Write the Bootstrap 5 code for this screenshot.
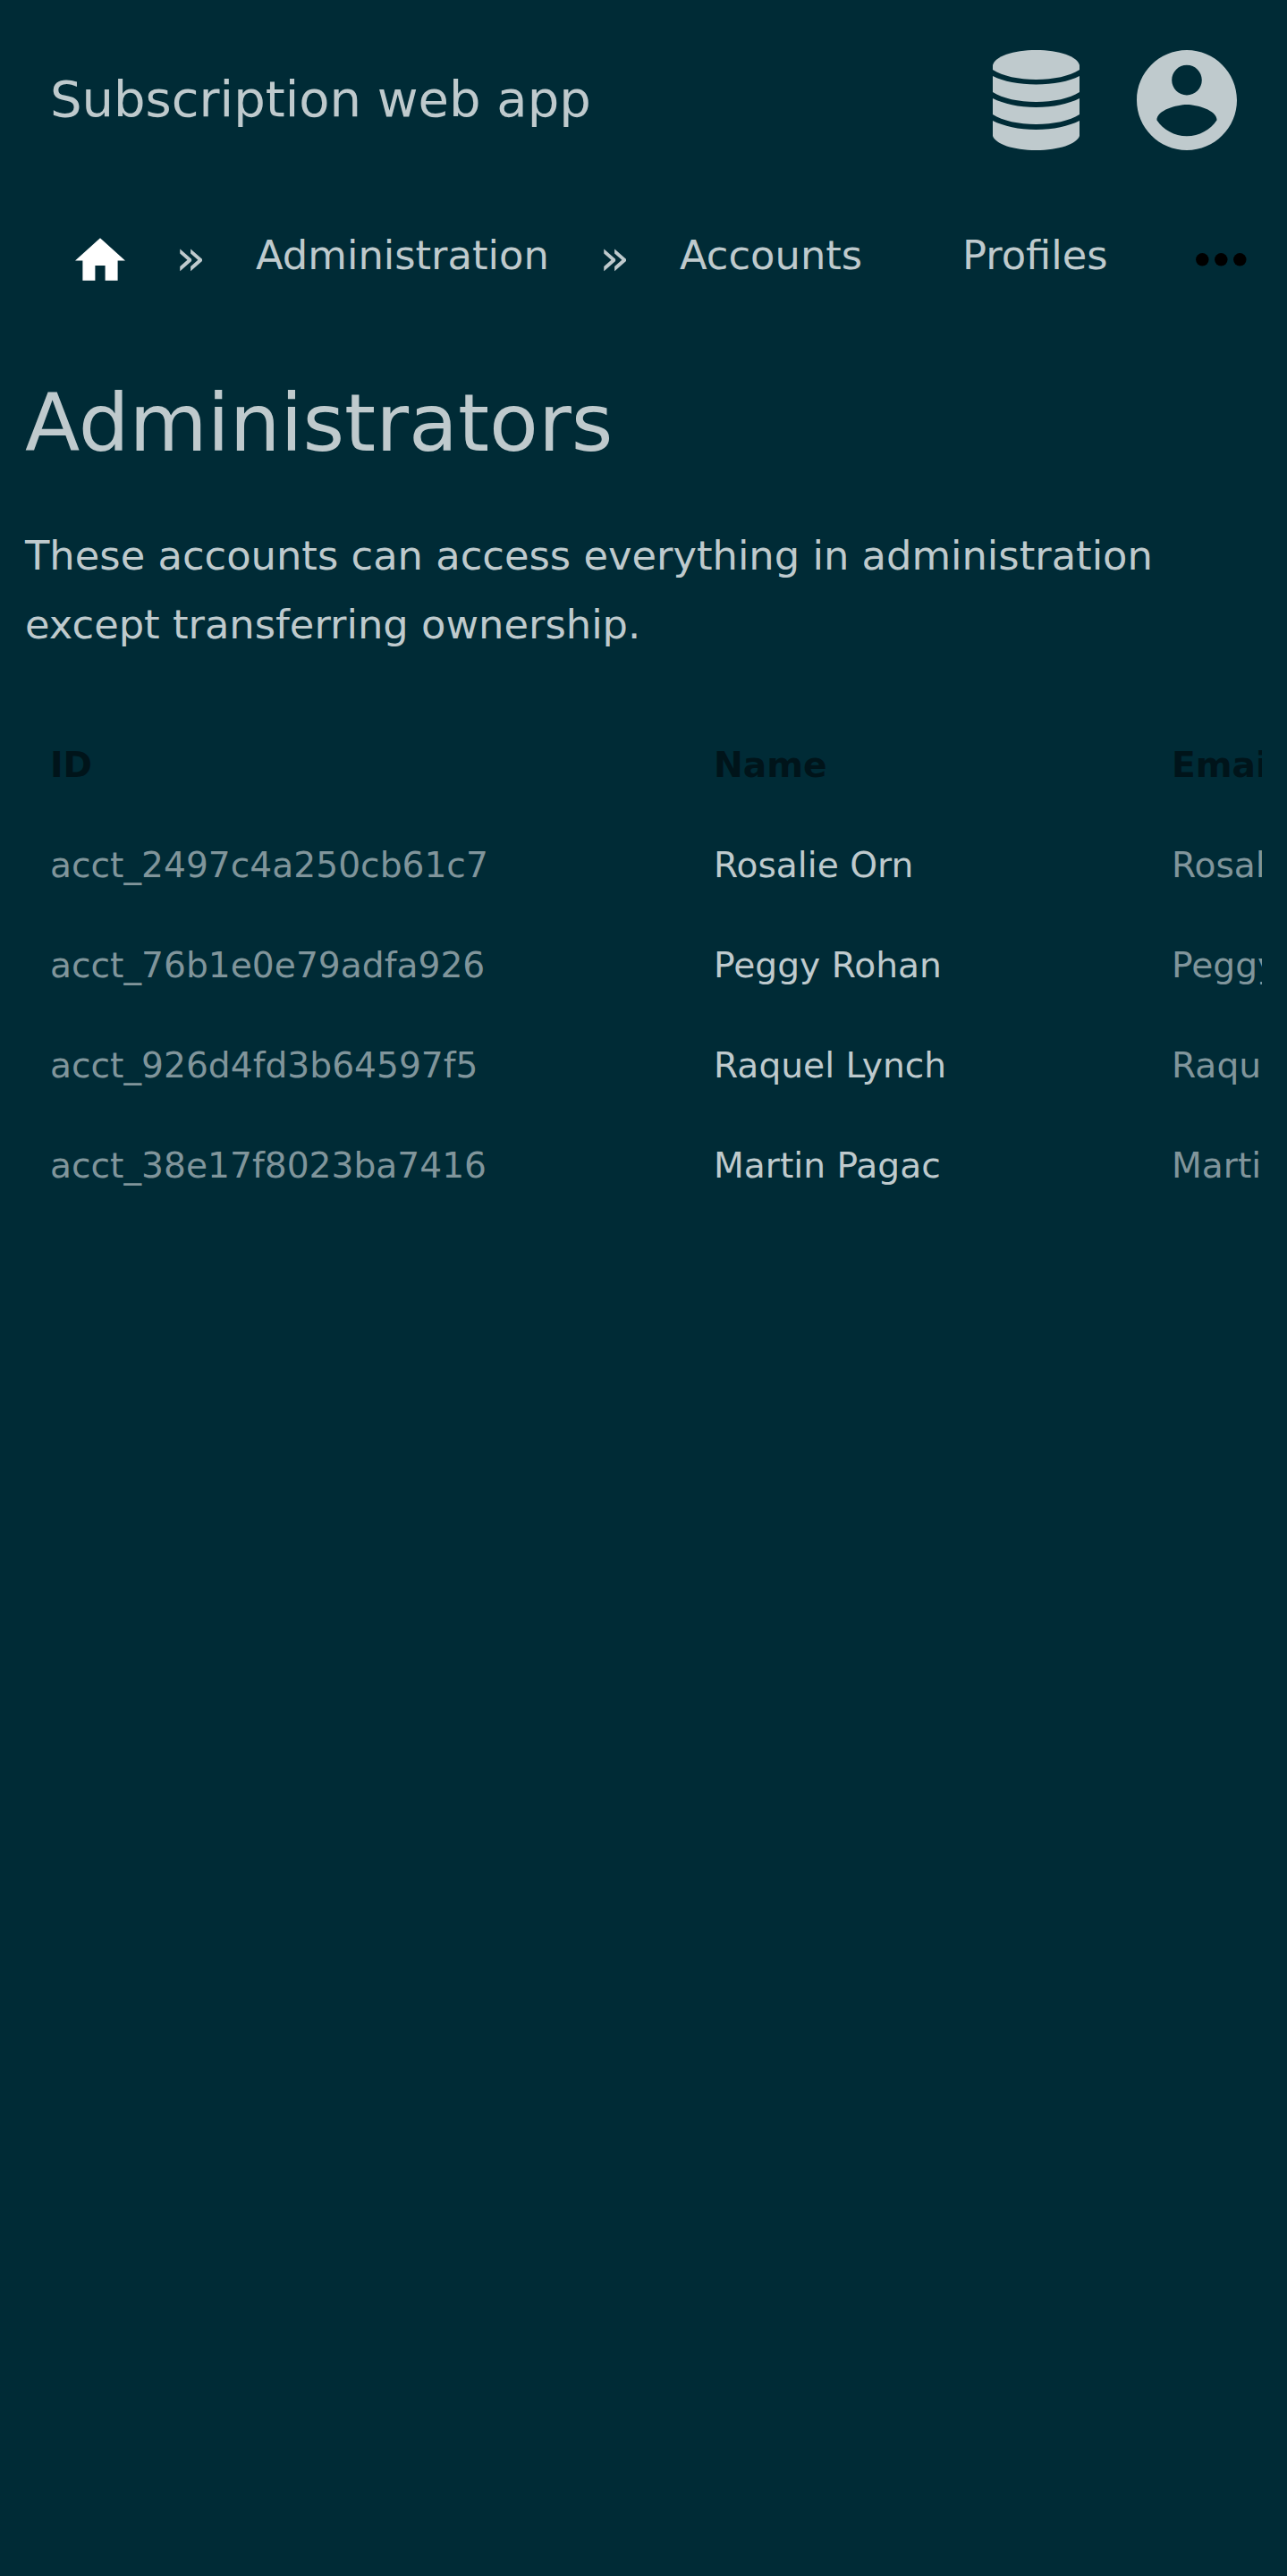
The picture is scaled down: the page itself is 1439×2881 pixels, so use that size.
<!DOCTYPE html>
<html lang="en">
<head>
<meta charset="utf-8">
<meta name="viewport" content="width=device-width, initial-scale=1">
<title>Administrators</title>
<link href="https://cdn.jsdelivr.net/npm/bootstrap@5.3.0/dist/css/bootstrap.min.css" rel="stylesheet">
<style>
  body { background: #002b36; color: #bfcacd; font-family: "DejaVu Sans", sans-serif; min-height: 2881px; overflow-x: hidden; }
  .app-header { height: 224px; padding: 0 56px; }
  .app-title { font-size: 56px; line-height: 84px; color: inherit; margin: 0 0 3px; padding: 0; white-space: nowrap; }
  .app-title:hover { color: inherit; }
  .app-icons { gap: 64px; }
  .app-icons svg, .crumbs svg { display: block; fill: currentColor; }
  .crumbs { height: 126px; font-size: 44.8px; line-height: 66px; padding-top: 29px; white-space: nowrap; }
  .crumbs a { color: inherit; text-decoration: none; }
  .crumb-home { margin: 13px 56px 0 84px; color: #fff !important; }
  .crumb-sep { font-size: 56px; width: 34px; margin-top: 2px; }
  .crumb-admin { width: 327px; margin: 0 57px 0 56px; }
  .crumb-accounts { width: 206px; margin-left: 56px; margin-right: 110px; }
  .crumb-profiles { width: 164px; }
  .crumb-more { margin: 30px 0 0 97px; color: #000 !important; }
  .page-main { padding: 56px 28px 0; }
  .page-title { font-size: 89.6px; line-height: 135px; font-weight: 400; margin: 0 0 42px; }
  .page-intro { font-size: 44.8px; line-height: 77px; margin: 0 0 63px; }
  .table-clip { overflow: hidden; }
  .account-table { --bs-table-bg: transparent; --bs-table-color: #bfcacd; width: 1900px; table-layout: fixed; font-size: 39.2px; line-height: 56px; margin: 0; white-space: nowrap; }
  .account-table > :not(caption) > * > * { padding: 28px; border: 0; }
  .account-table th { color: #00141a; font-weight: 700; }
  .account-table .dim { color: #80959b; }
  .col-id { width: 742px; }
  .col-name { width: 512px; }
</style>
</head>
<body>
<header class="app-header d-flex align-items-center justify-content-between">
  <a class="navbar-brand app-title" href="#">Subscription web app</a>
  <nav class="app-icons d-flex">
    <a class="text-reset" href="#" aria-label="Database">
      <svg width="97" height="112" viewBox="0 0 97 112">
        <path d="M0 17C2 7 23 0 48.500 0S95 7 97 17V22C86 29 68 33 48.500 33S11 29 0 22Z"/>
        <path d="M0 29C12 35 29 38.500 48.500 38.500S85 35 97 29V47C86 54 68 58 48.500 58S11 54 0 47Z"/>
        <path d="M0 54C12 60 29 64 48.500 64S85 60 97 54V72C86 79 68 83 48.500 83S11 79 0 72Z"/>
        <path d="M0 79C12 85 29 89 48.500 89S85 85 97 79V96C94 105 74 112 48.500 112S3 105 0 96Z"/>
      </svg>
    </a>
    <a class="text-reset" href="#" aria-label="Account">
      <svg width="112" height="112" viewBox="2 2 20 20"><path d="M12 2C6.480 2 2 6.480 2 12s4.480 10 10 10 10-4.480 10-10S17.520 2 12 2zm0 3c1.660 0 3 1.340 3 3s-1.340 3-3 3-3-1.340-3-3 1.340-3 3-3zm0 14.200c-2.500 0-4.710-1.280-6-3.220.030-1.990 4-3.080 6-3.080 1.990 0 5.970 1.090 6 3.080-1.290 1.940-3.500 3.220-6 3.220z"/></svg>
    </a>
  </nav>
</header>
<nav class="crumbs d-flex align-items-start" aria-label="breadcrumb">
  <a class="crumb-home" href="#" aria-label="Home"><svg width="56" height="48" viewBox="0 0 20 17"><path d="M8 17v-6h4v6h5V9h3L10 0 0 9h3v8z"/></svg></a>
  <span class="crumb-sep">»</span>
  <a class="crumb-admin" href="#">Administration</a>
  <span class="crumb-sep">»</span>
  <a class="crumb-accounts" href="#">Accounts</a>
  <a class="crumb-profiles" href="#">Profiles</a>
  <a class="crumb-more" href="#" aria-label="More"><svg width="57" height="15" viewBox="0 0 57 15"><circle cx="7.300" cy="7.300" r="7.200"/><circle cx="28.300" cy="7.300" r="7.200"/><circle cx="49.300" cy="7.300" r="7.200"/></svg></a>
</nav>
<main class="page-main">
  <h1 class="page-title">Administrators</h1>
  <p class="page-intro">These accounts can access everything in administration except transferring ownership.</p>
  <div class="table-clip">
    <table class="table account-table">
      <colgroup><col class="col-id"><col class="col-name"><col></colgroup>
      <thead><tr><th>ID</th><th>Name</th><th>Email</th></tr></thead>
      <tbody>
        <tr><td class="dim">acct_2497c4a250cb61c7</td><td>Rosalie Orn</td><td class="dim">Rosalie</td></tr>
        <tr><td class="dim">acct_76b1e0e79adfa926</td><td>Peggy Rohan</td><td class="dim">Peggy</td></tr>
        <tr><td class="dim">acct_926d4fd3b64597f5</td><td>Raquel Lynch</td><td class="dim">Raquel</td></tr>
        <tr><td class="dim">acct_38e17f8023ba7416</td><td>Martin Pagac</td><td class="dim">Martin</td></tr>
      </tbody>
    </table>
  </div>
</main>
<script src="https://cdn.jsdelivr.net/npm/bootstrap@5.3.0/dist/js/bootstrap.bundle.min.js"></script>
</body>
</html>
